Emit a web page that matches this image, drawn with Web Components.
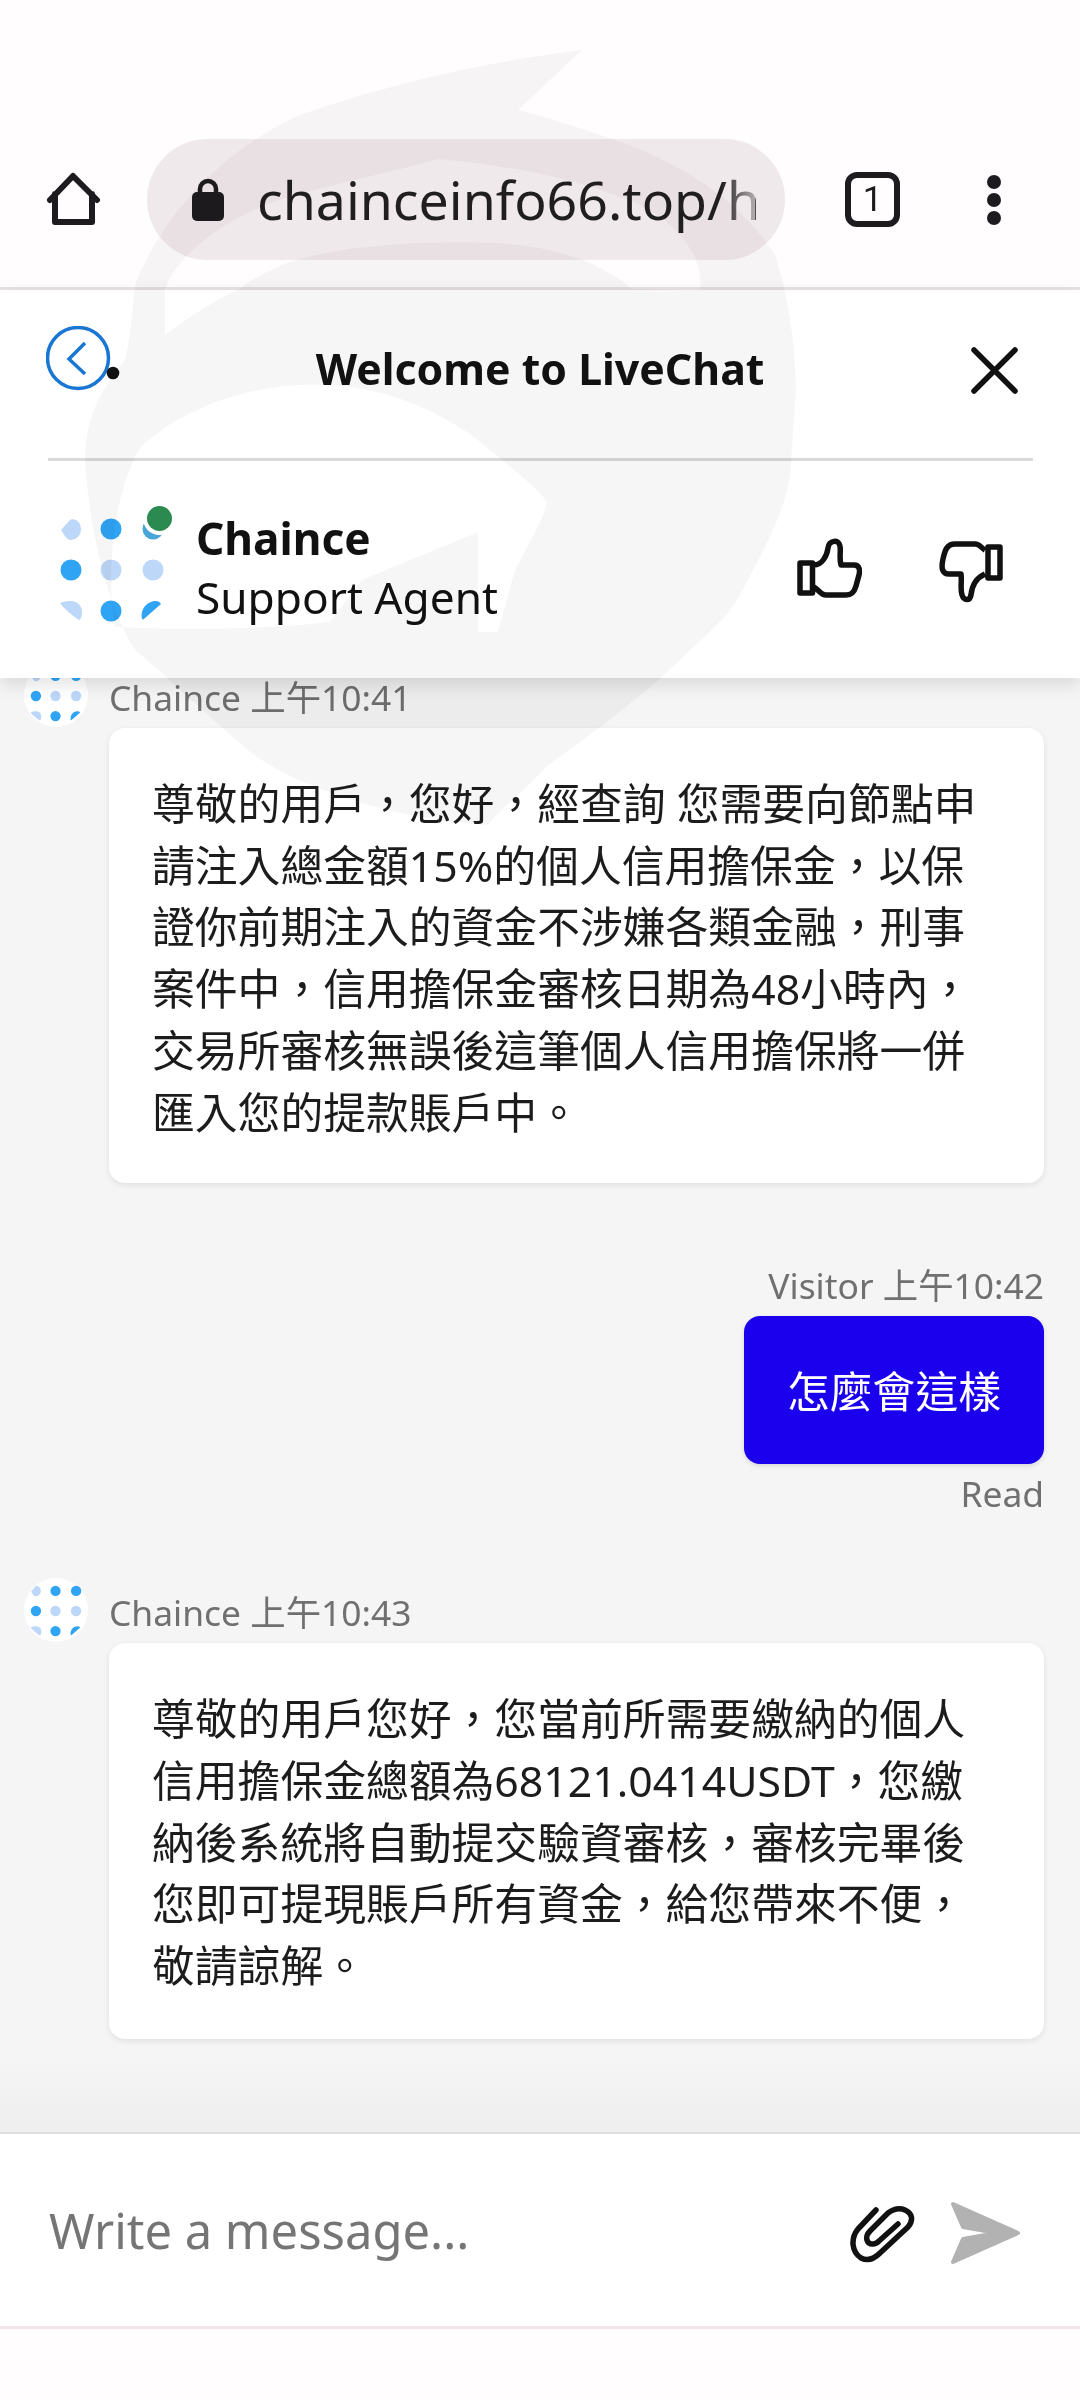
<!DOCTYPE html>
<html lang="zh-Hant"><head><meta charset="utf-8"><title>LiveChat</title>
<style>
html,body{margin:0;padding:0;background:#fffdfe}
body{width:1080px;height:2400px;overflow:hidden;font-family:"Noto Sans","Noto Sans CJK TC",sans-serif}
</style></head><body>
<chat-page>
  <browser-bar slot="top" url="chainceinfo66.top/h"></browser-bar>
  <chat-header slot="top"></chat-header>
  <chat-msg who="Chaince" time="上午10:41" pos="first">尊敬的用戶，您好，經查詢 您需要向節點申<br>請注入總金額15%的個人信用擔保金，以保<br>證你前期注入的資金不涉嫌各類金融，刑事<br>案件中，信用擔保金審核日期為48小時內，<br>交易所審核無誤後這筆個人信用擔保將一併<br>匯入您的提款賬戶中。</chat-msg>
  <chat-msg who="Visitor" time="上午10:42" mine>怎麼會這樣</chat-msg>
  <chat-msg who="Chaince" time="上午10:43">尊敬的用戶您好，您當前所需要繳納的個人<br>信用擔保金總額為68121.0414USDT，您繳<br>納後系統將自動提交驗資審核，審核完畢後<br>您即可提現賬戶所有資金，給您帶來不便，<br>敬請諒解。</chat-msg>
  <chat-input slot="bottom"></chat-input>
</chat-page>
<script>
const FONT='"Noto Sans","Noto Sans CJK TC",sans-serif';
const B='#2fa4f5',L='#bdd7f8';
const logo=(tr)=>`
<path fill="${L}" d="M61 530 70 520C72 518 81 519 81 530A10.5 10.5 0 0 1 70 540C66 539 64 534 61 530Z"/>
<circle cx="111" cy="529" r="10.5" fill="${B}"/>
<circle cx="153" cy="529" r="10.5" fill="${tr}"/>
<circle cx="71" cy="570" r="10.5" fill="${B}"/>
<circle cx="111" cy="570" r="10.5" fill="${L}"/>
<circle cx="153" cy="570" r="10.5" fill="${L}"/>
<path fill="${L}" d="M60 603C66 601 70 601 72 601A10.5 10.5 0 0 1 82 612C82 616 81 619 79 620C72 615 65 610 60 603Z"/>
<circle cx="111" cy="611" r="10.5" fill="${B}"/>
<path fill="${B}" d="M142 619C140 608 148 601 156 601C158 601 160 602 161 604L145 618C144 619 143 620 142 619Z"/>`;
function def(name,html){
  customElements.define(name,class extends HTMLElement{
    constructor(){super();this.attachShadow({mode:'open'});}
    connectedCallback(){this.shadowRoot.innerHTML=typeof html==='function'?html(this):html;}
  });
}
def('chat-page',`<style>
:host{display:flex;flex-direction:column;width:1080px;height:2400px;position:relative;overflow:hidden;background:#fffdfe}
.top{position:relative;z-index:2;display:block;flex:none}
.list{flex:none;height:1454px;background:linear-gradient(#f5f5f5 0,#f5f5f5 1380px,#eeeeee 100%);overflow:hidden}
.in{display:flex;flex-direction:column;margin-top:-6px}
.bottom{display:block;flex:none;position:relative;z-index:2}
.wm{position:absolute;left:0;top:0;z-index:3;pointer-events:none;mix-blend-mode:multiply}
</style>
<div class="top"><slot name="top"></slot></div>
<div class="list"><div class="in"><slot></slot></div></div>
<div class="bottom"><slot name="bottom"></slot></div>
<svg class="wm" width="1080" height="900" viewBox="0 0 1080 900"><path fill="#f7f6f6" fill-rule="evenodd" d="M582 50C500 60 400 80 300 115C220 150 160 220 135 285C132 310 132 330 125 360C100 390 85 420 85 460C90 540 110 610 135 650C160 670 190 700 249 751C300 790 400 820 488 825C500 810 530 785 547 766C590 735 630 705 662 677C700 640 725 620 736 602C770 540 790 500 791 463L796 388C795 350 790 300 775 255C740 200 680 160 600 135C570 125 540 115 518 110Z
M165 289C175 260 220 215 299 194C350 180 400 170 438 159C500 165 570 175 640 205C680 225 705 260 700 290L632 289C600 262 560 248 500 243C430 240 340 245 290 262C270 270 250 280 239 289C215 300 185 320 165 335Z
M140 448C180 410 240 388 300 385C380 380 450 415 490 450C520 475 545 495 547 503C540 530 520 555 513 577L498 632 478 632 478 532 362 580 330 622C260 630 180 630 115 627C105 570 115 490 140 448Z"/></svg>`);
def('browser-bar',h=>`<style>
:host{display:flex;align-items:flex-start;box-sizing:border-box;height:290px;background:#fffdfe;border-bottom:3px solid #e8e4e6;font-family:${FONT}}
.home{margin:172px 0 0 46px;flex:none}
.pill{margin:139px 0 0 45px;width:638px;height:121px;border-radius:61px;background:#f0e9ec;display:flex;align-items:center;box-sizing:border-box;padding-left:44px;flex:none;overflow:hidden;position:relative}
.pill span{font-size:53.6px;color:#211e20;margin-left:32px;white-space:nowrap;line-height:121px}
.pill i{position:absolute;right:30px;top:0;bottom:0;width:34px;background:linear-gradient(90deg,rgba(240,233,236,0),rgba(240,233,236,.7))}
.tab{flex:none;margin:172px 0 0 60px;width:55px;height:55px;box-sizing:border-box;border:6.5px solid #1d1b1d;border-radius:12px;display:flex;align-items:center;justify-content:center;font-size:35px;color:#1d1b1d;font-family:Roboto,sans-serif;line-height:1;font-weight:400}
.more{flex:none;margin:175px 0 0 86px}
</style>
<svg class="home" width="56" height="56" viewBox="0 0 56 56"><path d="M4 28 27 4 51 28M9 22V50H46V22" fill="none" stroke="#1d1b1d" stroke-width="6" stroke-linejoin="round" stroke-linecap="round"/></svg>
<div class="pill"><svg width="34" height="44" viewBox="0 0 34 44" style="flex:none"><path d="M9 16V11a8 8 0 0 1 16 0V16" fill="none" stroke="#1d1b1d" stroke-width="4.5"/><rect x="1" y="14" width="32" height="29" rx="5" fill="#1d1b1d"/></svg><span>${h.getAttribute('url')}</span><i></i></div>
<div class="tab">1</div>
<svg class="more" width="16" height="50" viewBox="0 0 16 50"><circle cx="8" cy="7" r="7" fill="#1d1b1d"/><circle cx="8" cy="25" r="7" fill="#1d1b1d"/><circle cx="8" cy="43" r="7" fill="#1d1b1d"/></svg>`);
def('chat-header',`<style>
:host{display:block;background:#fff;height:388px;box-shadow:0 6px 18px rgba(0,0,0,.12);font-family:${FONT};color:#111}
.row1{height:168px;margin:0 47px 0 48px;border-bottom:3px solid #d9d9d9;display:grid;grid-template-columns:74px 1fr 47px;align-items:start}
.back{margin:36px 0 0 -2px}
.title{font-weight:700;font-size:42.8px;text-align:center;line-height:58px;margin-top:50px;padding-right:28px}
.x{margin:57px 0 0 -15px}
.row2{display:flex;align-items:center;height:217px;padding-left:56px}
.av{flex:none;width:140px;height:217px}
.txt{flex:1;line-height:59px;margin-top:-3px;font-size:44.2px}
.txt b{display:block}
.th{flex:none}
</style>
<div class="row1">
<svg class="back" width="76" height="80" viewBox="0 0 76 80"><circle cx="32" cy="32" r="30.5" fill="none" stroke="#1976d2" stroke-width="3.5"/><path d="M39 17 23 33 39 48" fill="none" stroke="#1976d2" stroke-width="3.5"/><circle cx="67" cy="47" r="6.3" fill="#111"/></svg>
<div class="title">Welcome to LiveChat</div>
<svg class="x" width="47" height="47" viewBox="0 0 47 47"><path d="M3 3 44 44M44 3 3 44" stroke="#111" stroke-width="5.5" stroke-linecap="round"/></svg>
</div>
<div class="row2">
<svg class="av" viewBox="56 461 140 217">${logo('#4aa5d8')}<circle cx="159.5" cy="518.5" r="16.5" fill="#fff"/><circle cx="159.5" cy="518.5" r="12.5" fill="#2a8a4f"/></svg>
<div class="txt"><b>Chaince</b>Support Agent</div>
<svg class="th" style="margin-right:77px;margin-top:-3px" width="65" height="61" viewBox="0 0 65 61"><path d="M3 25H15.5V55H3ZM17 27C25 27 30 18 31 10C32 2 42 1 43 8C44 14 42 20 44 27H57C63 27 63 33 62 37L59 48C57 55 54 57 49 57H29C24 57 22 52 17 49" fill="none" stroke="#111" stroke-width="5.5" stroke-linejoin="round"/></svg>
<svg class="th" style="margin-right:77px;margin-top:4px" width="64" height="62" viewBox="0 0 64 62"><path d="M49 6H61V37H49ZM46 9C42 7 41 3 36 3H16C8 3 6 9 4 18C2 27 3 33 10 33H22C23 40 21 48 23 54C25 60 31 60 32 54C33 44 37 37 46 33" fill="none" stroke="#111" stroke-width="5.5" stroke-linejoin="round"/></svg>
</div>`);
def('chat-msg',h=>{
 const mine=h.hasAttribute('mine'),first=h.getAttribute('pos')==='first';
 return `<style>
:host{display:flex;flex-direction:column;padding-right:36px;font-family:${FONT};${mine?'align-items:flex-end;margin-top:77px':'padding-left:109px;position:relative;'+(first?'':'margin-top:69px')}}
.meta{font-size:35.4px;line-height:50px;color:#707070;white-space:nowrap}
.b{box-sizing:border-box;border-radius:16px;font-size:42.8px;line-height:61.7px;white-space:nowrap;margin-top:6px;${mine?'background:#1b00ee;color:#fff;padding:45px 43px 41.3px 43px;box-shadow:0 2px 5px rgba(0,0,0,.12)':`background:#fff;color:#1c1c1c;padding:45px 44px ${first?40:42}px 43px;box-shadow:0 2px 6px rgba(0,0,0,.09)`}}
.read{font-size:35.4px;line-height:50px;color:#707070;margin-top:4px}
.av{position:absolute;left:24px;top:-9px}
</style>
${mine?'':`<svg class="av" width="64" height="64" viewBox="0 0 64 64"><circle cx="32" cy="32" r="32" fill="#fff"/><g transform="translate(32 33) scale(.49) translate(-112 -570)">${logo(B)}</g></svg>`}
<div class="meta">${h.getAttribute('who')} ${h.getAttribute('time')}</div>
<div class="b"><slot></slot></div>
${mine?'<div class="read">Read</div>':''}`;
});
def('chat-input',`<style>
:host{display:flex;align-items:center;box-sizing:border-box;height:197px;background:#fff;border-top:2px solid #dfdfdf;border-bottom:3px solid #f2e5ea;font-family:${FONT};padding-left:49px}
.p{flex:1;font-size:48.9px;color:#757575;line-height:64px;margin-top:0}
.clip{margin-right:33px;margin-top:8px}
.send{margin-right:59px;margin-top:5px}
</style>
<div class="p">Write a message...</div>
<svg class="clip" width="67" height="58" viewBox="0 0 67 58"><path d="M26 5 8 24C0 34 2 47 11 53C19 57 26 52 30 48L58 22C64 15 62 8 55 5C48 2 42 5 38 8L20 26C14 32 17 40 23 39C25 39 27 38 29 36L48 19" fill="none" stroke="#111" stroke-width="5.5" stroke-linecap="round" stroke-linejoin="round"/></svg>
<svg class="send" width="71" height="64" viewBox="0 0 71 64"><path d="M3 3 68 32 3 61 13 38 47 32 13 26Z" fill="#b2b2b2" stroke="#b2b2b2" stroke-width="4" stroke-linejoin="round"/></svg>`);
</script>
</body></html>
